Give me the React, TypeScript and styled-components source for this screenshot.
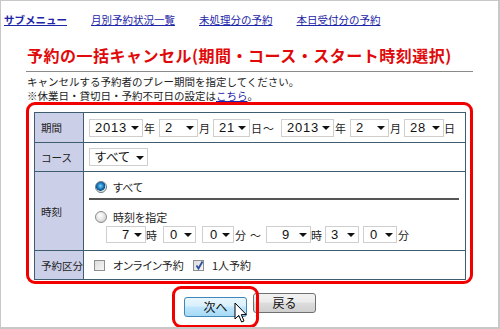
import React from 'react';
import styled, { createGlobalStyle } from 'styled-components';

const GlobalStyle = createGlobalStyle`
  html, body {
    margin: 0;
    padding: 0;
    background: #ffffff;
  }
  body {
    font-family: "Noto Sans CJK JP", "Noto Sans", sans-serif;
    color: #222;
  }
`;

const Page = styled.div`
  position: relative;
  width: 500px;
  height: 329px;
  box-sizing: border-box;
  border: 1px solid #c8c8c8;
  border-right-width: 2px;
  border-bottom-width: 2px;
  overflow: hidden;
`;

const Nav = styled.nav`
  display: flex;
  gap: 24px;
  padding: 12px 0 0 3px;
  height: 14px;
  line-height: 14px;
`;

const NavLink = styled.a<{ $bold?: boolean }>`
  font-size: 10.5px;
  color: #1c24a8;
  text-decoration: underline;
  font-weight: ${({ $bold }) => ($bold ? 700 : 400)};
  cursor: pointer;
`;

const Content = styled.div`
  width: 447px;
  margin-left: 25px;
`;

const Title = styled.h1`
  margin: 17px 0 0;
  padding: 0 0 5px 1px;
  font-size: 16px;
  line-height: 22px;
  font-weight: 700;
  letter-spacing: 0.5px;
  color: #e00a0a;
  border-bottom: 1px solid #8a8a8a;
`;

const Description = styled.p`
  margin: 3px 0 0 1px;
  font-size: 10.5px;
  line-height: 14px;
  color: #222;
`;

const InlineLink = styled.a`
  color: #1c24a8;
  text-decoration: underline;
`;

const FormBox = styled.div`
  margin-top: -1px;
  border: 3px solid #f20000;
  border-radius: 9px;
  padding: 7px 3px 1px 5px;
`;

const FormTable = styled.table`
  width: 432px;
  border-collapse: collapse;
  border: 1px solid #3e5d70;
`;

const LabelCell = styled.th<{ $h: number }>`
  width: 45px;
  height: ${({ $h }) => $h}px;
  padding: 0 0 0 6px;
  background: #cbcfe7;
  border: 1px solid #3e5d70;
  font-size: 10.5px;
  font-weight: 400;
  text-align: left;
  vertical-align: middle;
  color: #222;
  white-space: nowrap;
`;

const ValueCell = styled.td<{ $top?: boolean }>`
  padding: ${({ $top }) => ($top ? '8px 6px 0 5px' : '0 6px 0 5px')};
  border: 1px solid #3e5d70;
  vertical-align: ${({ $top }) => ($top ? 'top' : 'middle')};
`;

const FieldRow = styled.div<{ $indent?: number; $mt?: number }>`
  display: flex;
  align-items: center;
  padding-left: ${({ $indent }) => $indent ?? 0}px;
  margin-top: ${({ $mt }) => $mt ?? 0}px;
`;

const SelectBox = styled.div<{ $w: number; $pad: number; $h?: number }>`
  display: flex;
  align-items: center;
  justify-content: space-between;
  box-sizing: border-box;
  width: ${({ $w }) => $w}px;
  height: ${({ $h }) => $h ?? 18}px;
  padding: 0 3px 0 ${({ $pad }) => $pad}px;
  border: 1px solid #cfcfcf;
  background: #fff;
  color: #111;
`;

const SelectText = styled.span<{ $kana?: boolean }>`
  font-family: ${({ $kana }) =>
    $kana ? '"Noto Sans CJK JP", sans-serif' : '"Liberation Sans", Arial, sans-serif'};
  font-size: ${({ $kana }) => ($kana ? '12.5px' : '13px')};
  font-weight: 400;
  font-feature-settings: "palt";
  line-height: 16px;
  letter-spacing: ${({ $kana }) => ($kana ? '0.3px' : '0.8px')};
`;

const Arrow = styled.span`
  width: 0;
  height: 0;
  border-left: 4px solid transparent;
  border-right: 4px solid transparent;
  border-top: 4px solid #111;
  margin-top: 1px;
`;

const Unit = styled.span<{ $before?: number; $after?: number }>`
  font-size: 11px;
  line-height: 14px;
  margin: 0 ${({ $after }) => $after ?? 4}px 0 ${({ $before }) => $before ?? 1}px;
  color: #222;
`;

const RadioLine = styled.label<{ $mt?: number }>`
  display: flex;
  align-items: center;
  height: 14px;
  margin-top: ${({ $mt }) => $mt ?? 0}px;
  padding-left: 6px;
  font-size: 11px;
  color: #222;
  font-feature-settings: "palt";
`;

const Radio = styled.input`
  appearance: none;
  margin: 0 6px 0 0;
  width: 12px;
  height: 12px;
  border-radius: 50%;
  border: 1px solid #8c8c8c;
  box-sizing: border-box;
  background: radial-gradient(circle at 40% 35%, #ffffff 0%, #e2e2e2 55%, #bdbdbd 100%);

  &:checked {
    border-color: #6f7f8c;
    background: radial-gradient(circle at 45% 40%, #7fd0ff 0%, #1d7fc4 35%, #0b4c80 55%, #e8e8e8 62%, #c9c9c9 100%);
  }
`;

const Divider = styled.hr`
  margin: 4px 0 0;
  border: none;
  height: 2px;
  background: #555;
`;

const CheckLabel = styled.label<{ $gap?: number }>`
  display: inline-flex;
  align-items: center;
  margin-left: ${({ $gap }) => $gap ?? 0}px;
  font-size: 11px;
  color: #222;
  font-feature-settings: "palt";
`;

const CheckBox = styled.span`
  position: relative;
  display: inline-block;
  width: 11px;
  height: 11px;
  box-sizing: border-box;
  margin-right: 8px;
  border: 1px solid #8e8f8f;
  background: linear-gradient(135deg, #dcdcdc 0%, #f6f6f6 100%);
`;

const CheckMark = styled.svg`
  position: absolute;
  left: 0;
  top: -1px;
`;

const ButtonRow = styled.div`
  display: flex;
  justify-content: center;
  gap: 6px;
  margin-top: 9px;
  padding-left: 1px;
`;

const ButtonWrap = styled.div`
  position: relative;
`;

const Button = styled.button<{ $primary?: boolean }>`
  width: 63px;
  height: 20px;
  padding: 0;
  border-radius: 3px;
  font-family: "Noto Sans CJK JP", sans-serif;
  font-size: 12px;
  line-height: 18px;
  color: #111;
  cursor: pointer;
  border: 1px solid ${({ $primary }) => ($primary ? '#3f87b8' : '#707070')};
  background: ${({ $primary }) =>
    $primary
      ? 'linear-gradient(#eaf6fd 0%, #d9f0fc 45%, #bee6fd 50%, #a7d9f5 100%)'
      : 'linear-gradient(#f2f2f2 0%, #ebebeb 45%, #dddddd 50%, #cfcfcf 100%)'};
`;

const Highlight = styled.span`
  position: absolute;
  left: -12px;
  right: -12px;
  top: -7px;
  bottom: -11px;
  border: 3px solid #f20000;
  border-radius: 9px;
  pointer-events: none;
`;

const Cursor = styled.svg`
  position: absolute;
  left: 50px;
  top: 9px;
`;

type Sel = { value: string; w: number; pad: number; kana?: boolean; h?: number };

const Select: React.FC<Sel> = ({ value, w, pad, kana, h }) => (
  <SelectBox $w={w} $pad={pad} $h={h}>
    <SelectText $kana={kana}>{value}</SelectText>
    <Arrow />
  </SelectBox>
);

export default function App() {
  return (
    <>
      <GlobalStyle />
      <Page>
        <Nav>
          <NavLink $bold>サブメニュー</NavLink>
          <NavLink>月別予約状況一覧</NavLink>
          <NavLink>未処理分の予約</NavLink>
          <NavLink>本日受付分の予約</NavLink>
        </Nav>
        <Content>
          <Title>予約の一括キャンセル(期間・コース・スタート時刻選択)</Title>
          <Description>
            キャンセルする予約者のプレー期間を指定してください。
            <br />
            ※休業日・貸切日・予約不可日の設定は<InlineLink>こちら</InlineLink>。
          </Description>
          <FormBox>
            <FormTable>
              <tbody>
                <tr>
                  <LabelCell $h={29}>期間</LabelCell>
                  <ValueCell>
                    <FieldRow>
                      <Select value="2013" w={54} pad={5} />
                      <Unit>年</Unit>
                      <Select value="2" w={39} pad={5} />
                      <Unit $after={3}>月</Unit>
                      <Select value="21" w={37} pad={5} />
                      <Unit $after={1}>日</Unit>
                      <Unit $before={0} $after={7}>～</Unit>
                      <Select value="2013" w={53} pad={5} />
                      <Unit>年</Unit>
                      <Select value="2" w={39} pad={5} />
                      <Unit $after={3}>月</Unit>
                      <Select value="28" w={40} pad={5} />
                      <Unit $before={0}>日</Unit>
                    </FieldRow>
                  </ValueCell>
                </tr>
                <tr>
                  <LabelCell $h={28}>コース</LabelCell>
                  <ValueCell>
                    <FieldRow>
                      <Select value="すべて" w={59} pad={5} kana />
                    </FieldRow>
                  </ValueCell>
                </tr>
                <tr>
                  <LabelCell $h={78}>時刻</LabelCell>
                  <ValueCell $top>
                    <RadioLine>
                      <Radio type="radio" name="time" defaultChecked />
                      すべて
                    </RadioLine>
                    <Divider />
                    <RadioLine $mt={10}>
                      <Radio type="radio" name="time" />
                      時刻を指定
                    </RadioLine>
                    <FieldRow $indent={17} $mt={2}>
                      <Select value="7" w={40} pad={15} h={17} />
                      <Unit $before={0} $after={6}>時</Unit>
                      <Select value="0" w={33} pad={6} h={17} />
                      <Unit $before={0} $after={6}></Unit>
                      <Select value="0" w={32} pad={7} h={17} />
                      <Unit>分</Unit>
                      <Unit $before={0} $after={5}>～</Unit>
                      <Select value="9" w={45} pad={15} h={17} />
                      <Unit $before={0} $after={3}>時</Unit>
                      <Select value="3" w={34} pad={5} h={17} />
                      <Unit $before={0} $after={4}></Unit>
                      <Select value="0" w={34} pad={6} h={17} />
                      <Unit>分</Unit>
                    </FieldRow>
                  </ValueCell>
                </tr>
                <tr>
                  <LabelCell $h={28}>予約区分</LabelCell>
                  <ValueCell>
                    <FieldRow $indent={5}>
                      <CheckLabel>
                        <CheckBox />
                        オンライン予約
                      </CheckLabel>
                      <CheckLabel $gap={9}>
                        <CheckBox>
                          <CheckMark width="11" height="11" viewBox="0 0 11 11">
                            <path d="M2.5 5.5 L4.5 8.5 L8.5 1.5" fill="none" stroke="#2c4f9e" strokeWidth="1.8" />
                          </CheckMark>
                        </CheckBox>
                        1人予約
                      </CheckLabel>
                    </FieldRow>
                  </ValueCell>
                </tr>
              </tbody>
            </FormTable>
          </FormBox>
          <ButtonRow>
            <ButtonWrap>
              <Button $primary>次へ</Button>
              <Highlight />
              <Cursor width="14" height="22" viewBox="0 0 14 22">
                <path
                  d="M1 1 L1 17 L4.8 13.4 L7.6 20 L10 19 L7.3 12.6 L12.3 12.6 Z"
                  fill="#fff"
                  stroke="#000"
                  strokeWidth="1"
                  strokeLinejoin="round"
                />
              </Cursor>
            </ButtonWrap>
            <Button>戻る</Button>
          </ButtonRow>
        </Content>
      </Page>
    </>
  );
}
